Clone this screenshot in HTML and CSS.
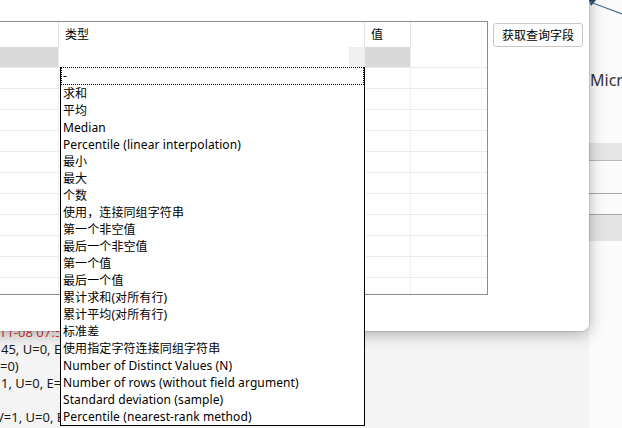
FILE: index.html
```html
<!DOCTYPE html>
<html lang="zh-CN">
<head>
    <meta charset="UTF-8">
    <meta name="viewport" content="width=device-width, initial-scale=1.0">
    <title>字段计算</title>
    <link rel="stylesheet" href="styles.css">
</head>
<body>

    <div class="backdrop">
        <div class="log">
            <div class="line red">11-08 07:53:12</div>
            <div class="line in1">45, U=0, E=0)</div>
            <div class="line">=0)</div>
            <div class="line in1">1, U=0, E=0)</div>
            <div class="line">&nbsp;</div>
            <div class="line out4">V=1, U=0, E=0)</div>
        </div>
        <div class="strip">
            <svg class="deco" width="33" height="20" viewBox="0 0 33 20">
                <path d="M0 0 L7 0 L2 6 Z" fill="#2c4e6e"/>
                <path d="M1 2 L33 14" stroke="#4a6f91" stroke-width="1.2" fill="none"/>
            </svg>
            <div class="micro">Microsoft</div>
            <div class="band"></div>
            <div class="gap1"></div>
            <div class="gap2"></div>
            <div class="band2"></div>
        </div>
    </div>

    <div class="dialog">
        <div class="table">
            <div class="row head">
                <div></div>
                <div>类型</div>
                <div>值</div>
                <div></div>
            </div>
            <div class="row edit">
                <div class="c1"></div>
                <div class="c2">
                    <div class="list">
                        <div class="opt focus">-</div>
                        <div class="opt">求和</div>
                        <div class="opt">平均</div>
                        <div class="opt">Median</div>
                        <div class="opt">Percentile (linear interpolation)</div>
                        <div class="opt">最小</div>
                        <div class="opt">最大</div>
                        <div class="opt">个数</div>
                        <div class="opt">使用，连接同组字符串</div>
                        <div class="opt">第一个非空值</div>
                        <div class="opt">最后一个非空值</div>
                        <div class="opt">第一个值</div>
                        <div class="opt">最后一个值</div>
                        <div class="opt">累计求和(对所有行)</div>
                        <div class="opt">累计平均(对所有行)</div>
                        <div class="opt">标准差</div>
                        <div class="opt">使用指定字符连接同组字符串</div>
                        <div class="opt">Number of Distinct Values (N)</div>
                        <div class="opt">Number of rows (without field argument)</div>
                        <div class="opt">Standard deviation (sample)</div>
                        <div class="opt">Percentile (nearest-rank method)</div>
                    </div>
                </div>
                <div class="c3"></div>
                <div></div>
            </div>
            <div class="row"><div></div><div></div><div></div><div></div></div>
            <div class="row"><div></div><div></div><div></div><div></div></div>
            <div class="row"><div></div><div></div><div></div><div></div></div>
            <div class="row"><div></div><div></div><div></div><div></div></div>
            <div class="row"><div></div><div></div><div></div><div></div></div>
            <div class="row"><div></div><div></div><div></div><div></div></div>
            <div class="row"><div></div><div></div><div></div><div></div></div>
            <div class="row"><div></div><div></div><div></div><div></div></div>
            <div class="row"><div></div><div></div><div></div><div></div></div>
            <div class="row"><div></div><div></div><div></div><div></div></div>
            <div class="row last"><div></div><div></div><div></div><div></div></div>
        </div>
        <button class="btn">获取查询字段</button>
    </div>

</body>
</html>
```

FILE: styles.css
```css
body {
    margin: 0;
    width: 622px;
    height: 428px;
    overflow: hidden;
    position: relative;
    background-color: #f4f4f4;
    font-family: 'Noto Sans', 'Noto Sans CJK SC', sans-serif;
    font-size: 12px;
    color: #000;
}
.backdrop {
    display: flex;
    height: 428px;
}
.log {
    width: 589px;
    flex: none;
    padding-top: 324px;
    box-sizing: border-box;
    font-size: 13px;
    line-height: 17px;
    color: #1a1a1a;
    overflow: hidden;
}
/* the rest of each line sits under the open list */
.line {
    width: 60px;
    overflow: hidden;
    white-space: nowrap;
}
.red {
    color: #e0353b;
    margin-left: -1px;
}
.in1 {
    margin-left: 1px;
    width: 59px;
}
.out4 {
    margin-left: -4px;
    width: 64px;
}
.strip {
    width: 33px;
    flex: none;
    display: flex;
    flex-direction: column;
    background-color: #fbfbfb;
    overflow: hidden;
}
.deco {
    display: block;
    flex: none;
}
.micro {
    margin-top: 50px;
    margin-left: 1px;
    font-size: 16px;
    line-height: 20px;
    color: #333;
    white-space: nowrap;
}
.band {
    margin-top: 53px;
    height: 17px;
    background-color: #e6e6e6;
    border-bottom: 1px solid #b8b8b8;
}
.gap1 {
    height: 32px;
    border-bottom: 1px solid #a8a8a8;
}
.gap2 {
    height: 20px;
}
.band2 {
    height: 26px;
    border-top: 1px solid #a8a8a8;
    background-color: #e4e4e4;
}

.dialog {
    position: absolute;
    left: -20px;
    top: -20px;
    width: 609px;
    height: 351px;
    box-sizing: border-box;
    padding: 41px 0 0 10px;
    background: #fff;
    border-radius: 0 0 7px 0;
    box-shadow: 0 0 0 1px rgba(0, 0, 0, 0.1), 0 3px 16px rgba(0, 0, 0, 0.3);
    display: flex;
    align-items: flex-start;
    z-index: 1;
}
.table {
    width: 498px;
    box-sizing: border-box;
    border: 1px solid #8c8c8c;
}
.row {
    display: grid;
    grid-template-columns: 68px 306px 46px 76px;
    height: 21px;
}
.row > div {
    box-sizing: border-box;
    border-right: 1px solid #eceff4;
    border-bottom: 1px solid #ebebeb;
}
.row > div:last-child {
    border-right: none;
}
.head {
    height: 25px;
}
.head > div {
    border-bottom: none;
    border-right-color: #e4e4e4;
    padding-left: 6px;
    line-height: 25px;
}
.last {
    height: 16px;
}
.last > div {
    border-bottom: none;
}
.edit .c1 {
    background-color: #d9d9d9;
}
.edit .c2 {
    position: relative;
    background: linear-gradient(to right, #fff 290px, #efefef 290px);
    border-right-color: #efefef;
}
.edit .c3 {
    background-color: #d8d8d8;
}
.list {
    position: absolute;
    left: 1px;
    top: 100%;
    width: 305px;
    box-sizing: border-box;
    border: 1px solid #000;
    border-top: none;
    background: #fff;
    z-index: 2;
}
.opt {
    height: 17px;
    line-height: 17px;
    padding-left: 2px;
    letter-spacing: 0.1px;
    white-space: nowrap;
}
.opt.focus {
    height: 18px;
    line-height: 16px;
    padding-left: 1px;
    border: 1px dotted #000;
    box-sizing: border-box;
}
.btn {
    margin: 2px 0 0 5px;
    width: 90px;
    height: 24px;
    padding: 0;
    border: 1px solid #c9c9c9;
    border-radius: 3px;
    background-color: #fdfdfd;
    font-family: 'Noto Sans', 'Noto Sans CJK SC', sans-serif;
    font-size: 12px;
    color: #000;
}
```
